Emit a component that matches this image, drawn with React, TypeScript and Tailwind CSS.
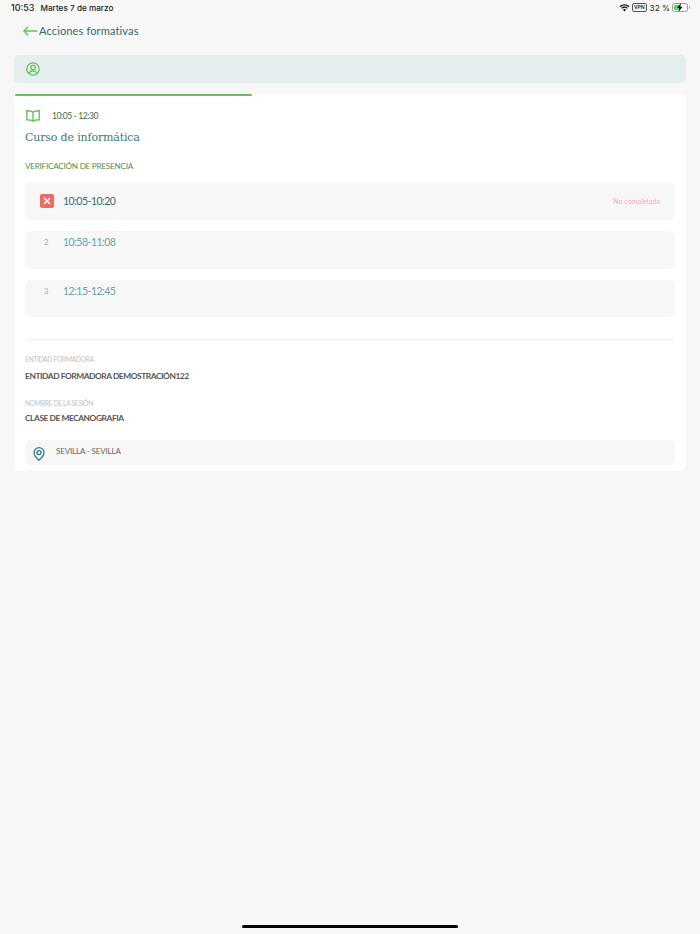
const sans = "font-['Lato','Noto_Sans',sans-serif]";

function StatusBar() {
  return (
    <div className="flex h-4 items-center justify-between pl-[11px] pr-[10px] font-['Inter',sans-serif] text-[9px] text-[#1c1c1c]">
      <div className="flex items-center gap-[6px]">
        <span className="font-medium">10:53</span>
        <span className="text-[8.2px] font-medium">Martes 7 de marzo</span>
      </div>
      <div className="flex items-center">
        <svg width="11" height="8" viewBox="0 0 16 12" fill="#111">
          <path d="M8 2.200c2.400 0 4.600 1 6.200 2.600l1.200-1.300C13.500 1.500 10.900.3 8 .3S2.500 1.500.6 3.500l1.200 1.300C3.400 3.200 5.600 2.200 8 2.200z" />
          <path d="M8 5.700c1.400 0 2.700.6 3.700 1.500l1.200-1.300C11.600 4.700 9.900 3.900 8 3.900s-3.600.8-4.900 2l1.200 1.300c1-.9 2.300-1.500 3.700-1.500z" />
          <path d="M8 7.500c-1 0-1.800.4-2.400 1L8 11.200l2.400-2.700c-.6-.6-1.400-1-2.400-1z" />
        </svg>
        <span className="ml-[2px] rounded-[2px] border border-[#555] px-[1px] text-[5px] leading-[7px] font-semibold">VPN</span>
        <span className="ml-[3px] text-[8.2px]">32 %</span>
        <div className="ml-[2px] flex items-center">
          <div className="relative h-[9px] w-[16px] rounded-[2.5px] border border-[#9a9a9a] p-[1px]">
            <div className="h-full w-[6px] rounded-[1px] bg-[#4cd964]" />
            <svg className="absolute top-[-1px] left-[3px]" width="8" height="9" viewBox="0 0 8 9" fill="#111">
              <path d="M5 0 1 5h2.300L2.500 9l4-5.300H4.300z" />
            </svg>
          </div>
          <div className="ml-[1px] h-[3px] w-[1px] rounded-r-sm bg-[#9a9a9a]" />
        </div>
      </div>
    </div>
  );
}

function SlotRow({ num, time }: { num: string; time: string }) {
  return (
    <div className="flex h-[37.5px] rounded-md bg-[#f7f7f7] pt-[2px]">
      <span className="w-[38px] pl-[4px] text-center text-[8px] leading-[18px] text-[#8fb8bc]">{num}</span>
      <span className="text-[10.5px] leading-[18px] tracking-[-0.5px] text-[#67a3a8]">{time}</span>
    </div>
  );
}

export default function App() {
  return (
    <div className={`min-h-[934px] bg-[#f7f7f7] ${sans}`}>
      <StatusBar />

      <div className="flex items-center pt-[6px] pl-[23px]">
        <svg width="15" height="10" viewBox="0 0 15 10" fill="none" stroke="#66c05c" strokeWidth="1.400">
          <path d="M14.500 5H1M5 .8 .9 5 5 9.200" />
        </svg>
        <span className="ml-[1px] text-[11.1px] leading-[18px] tracking-[0.1px] text-[#39686d]">Acciones formativas</span>
      </div>

      <div className="mx-[14px] mt-[15px] flex h-[28px] items-center rounded-[5px] bg-[#e6eff0] pl-[12px]">
        <svg width="14" height="14" viewBox="0 0 14 14" fill="none" stroke="#66c05c" strokeWidth="1.300">
          <circle cx="7" cy="7" r="6.200" />
          <circle cx="7" cy="5.600" r="2.300" />
          <path d="M3.200 11.400c.7-1.700 2.100-2.500 3.800-2.500s3.100.8 3.800 2.500" />
        </svg>
      </div>

      <div className="relative mx-[14px] mt-[11px] h-[377px] rounded-md bg-white px-[11px]">
        <div className="absolute top-0 left-[1px] h-[2px] w-[237px] rounded-full bg-[#66c05c]" />

        <div className="flex items-center pt-[15px] pl-[1px]">
          <svg width="14" height="12" viewBox="0 0 14 12" fill="none" stroke="#66c05c" strokeWidth="1.400">
            <path d="M7 2.200C6 1.200 4.500.8 .8.800v9c3.700 0 5.200.4 6.200 1.400 1-1 2.500-1.400 6.200-1.400v-9C9.500.8 8 1.200 7 2.200zM7 2.200v9" />
          </svg>
          <span className="ml-[12px] text-[8.5px] leading-[14px] tracking-[-0.4px] text-[#3d6b45]">10:05 - 12:30</span>
        </div>

        <h1 className="mt-[5px] font-['DejaVu_Serif',serif] text-[11px] leading-[20px] tracking-[-0.15px] text-[#39797f]">Curso de informática</h1>

        <p className="mt-[11px] text-[8.2px] leading-[14px] tracking-[-0.27px] text-[#4c9158]">VERIFICACIÓN DE PRESENCIA</p>

        <div className="mt-[9px] flex flex-col gap-[11px]">
          <div className="flex h-[38px] items-center rounded-md bg-[#f7f7f7] px-[15px]">
            <div className="flex h-[14px] w-[14px] items-center justify-center rounded-[2px] bg-[#ef6a64]">
              <svg width="8" height="8" viewBox="0 0 8 8" stroke="white" strokeWidth="1.500">
                <path d="M1 1l6 6M7 1 1 7" />
              </svg>
            </div>
            <span className="ml-[9px] pt-[1px] text-[10.5px] tracking-[-0.5px] text-[#2f6f76]">10:05-10:20</span>
            <span className="ml-auto text-[7px] text-[#f3b0ac]">No completada</span>
          </div>
          <SlotRow num="2" time="10:58-11:08" />
          <SlotRow num="3" time="12:15-12:45" />
        </div>

        <div className="mt-[21px] h-[3px] bg-[#f7f7f7]" />

        <p className="mt-[12px] text-[6.8px] leading-[12px] tracking-[-0.4px] text-[#c4c4c4]">ENTIDAD FORMADORA</p>
        <p className="mt-[4px] text-[8.4px] leading-[14px] font-bold tracking-[-0.44px] text-[#555]">ENTIDAD FORMADORA DEMOSTRACIÓN122</p>
        <p className="mt-[14px] text-[6.8px] leading-[12px] tracking-[-0.4px] text-[#c4c4c4]">NOMBRE DE LA SESIÓN</p>
        <p className="mt-[2px] text-[8.4px] leading-[14px] font-bold tracking-[-0.44px] text-[#555]">CLASE DE MECANOGRAFIA</p>

        <div className="mt-[15px] flex h-[25px] rounded-md bg-[#f7f7f7] pl-[8px]">
          <svg className="mt-[7px]" width="12" height="14" viewBox="0 0 12 14" fill="none" stroke="#2f7a80" strokeWidth="1.300">
            <path d="M6 13.200C3 10.500 1 8.200 1 5.700a5 5 0 0 1 10 0c0 2.500-2 4.800-5 7.500z" />
            <circle cx="6" cy="5.600" r="2" />
          </svg>
          <span className="ml-[11px] pt-[4px] text-[8px] leading-[14px] tracking-[-0.15px] text-[#666]">SEVILLA - SEVILLA</span>
        </div>
      </div>

      <div className="mx-auto mt-[454px] h-[3px] w-[216px] rounded-full bg-black" />
    </div>
  );
}
